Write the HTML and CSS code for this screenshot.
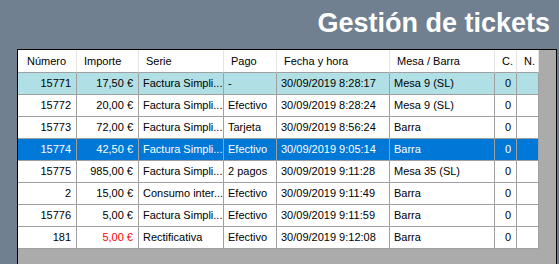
FILE: index.html
```html
<!DOCTYPE html>
<html lang="es">
<head>
    <meta charset="UTF-8">
    <meta name="viewport" content="width=device-width, initial-scale=1.0">
    <title>Gestión de tickets</title>
    <link rel="stylesheet" href="styles.css">
</head>
<body>
    <h1 class="title">Gestión de tickets</h1>

    <div class="grid">
        <div class="row header">
            <div class="cell">Número</div>
            <div class="cell">Importe</div>
            <div class="cell">Serie</div>
            <div class="cell">Pago</div>
            <div class="cell">Fecha y hora</div>
            <div class="cell">Mesa / Barra</div>
            <div class="cell">C.</div>
            <div class="cell">N.</div>
        </div>

        <div class="row current">
            <div class="cell num">15771</div>
            <div class="cell num">17,50 €</div>
            <div class="cell">Factura Simpli...</div>
            <div class="cell">-</div>
            <div class="cell">30/09/2019 8:28:17</div>
            <div class="cell">Mesa 9 (SL)</div>
            <div class="cell num">0</div>
            <div class="cell"></div>
        </div>
        <div class="row">
            <div class="cell num">15772</div>
            <div class="cell num">20,00 €</div>
            <div class="cell">Factura Simpli...</div>
            <div class="cell">Efectivo</div>
            <div class="cell">30/09/2019 8:28:24</div>
            <div class="cell">Mesa 9 (SL)</div>
            <div class="cell num">0</div>
            <div class="cell"></div>
        </div>
        <div class="row">
            <div class="cell num">15773</div>
            <div class="cell num">72,00 €</div>
            <div class="cell">Factura Simpli...</div>
            <div class="cell">Tarjeta</div>
            <div class="cell">30/09/2019 8:56:24</div>
            <div class="cell">Barra</div>
            <div class="cell num">0</div>
            <div class="cell"></div>
        </div>
        <div class="row selected">
            <div class="cell num">15774</div>
            <div class="cell num">42,50 €</div>
            <div class="cell">Factura Simpli...</div>
            <div class="cell">Efectivo</div>
            <div class="cell">30/09/2019 9:05:14</div>
            <div class="cell">Barra</div>
            <div class="cell num">0</div>
            <div class="cell"></div>
        </div>
        <div class="row">
            <div class="cell num">15775</div>
            <div class="cell num">985,00 €</div>
            <div class="cell">Factura Simpli...</div>
            <div class="cell">2 pagos</div>
            <div class="cell">30/09/2019 9:11:28</div>
            <div class="cell">Mesa 35 (SL)</div>
            <div class="cell num">0</div>
            <div class="cell"></div>
        </div>
        <div class="row">
            <div class="cell num">2</div>
            <div class="cell num">15,00 €</div>
            <div class="cell">Consumo inter...</div>
            <div class="cell">Efectivo</div>
            <div class="cell">30/09/2019 9:11:49</div>
            <div class="cell">Barra</div>
            <div class="cell num">0</div>
            <div class="cell"></div>
        </div>
        <div class="row">
            <div class="cell num">15776</div>
            <div class="cell num">5,00 €</div>
            <div class="cell">Factura Simpli...</div>
            <div class="cell">Efectivo</div>
            <div class="cell">30/09/2019 9:11:59</div>
            <div class="cell">Barra</div>
            <div class="cell num">0</div>
            <div class="cell"></div>
        </div>
        <div class="row">
            <div class="cell num">181</div>
            <div class="cell num negative">5,00 €</div>
            <div class="cell">Rectificativa</div>
            <div class="cell">Efectivo</div>
            <div class="cell">30/09/2019 9:12:08</div>
            <div class="cell">Barra</div>
            <div class="cell num">0</div>
            <div class="cell"></div>
        </div>
    </div>
</body>
</html>
```

FILE: styles.css
```css
body {
    font-family: "Liberation Sans", Arial, sans-serif;
    background-color: #708090;
    margin: 0;
    padding: 0;
    overflow: hidden;
    height: 264px;
}
.title {
    margin: 8px 0 0 0;
    padding-right: 9px;
    text-align: right;
    color: #fff;
    font-size: 27px;
    line-height: 30px;
    font-weight: bold;
}
.grid {
    margin: 11px 0 0 17px;
    width: 538px;
    height: 214px;
    border: 1px solid #000;
    background-color: #ababab;
    font-size: 11px;
    color: #000;
}
.row {
    display: grid;
    grid-template-columns: 59px 62px 85px 53px 113px 105px 22px 22px;
    height: 22px;
    background-color: #fff;
    width: 521px;
}
.cell {
    box-sizing: border-box;
    border-right: 1px solid #a0a0a0;
    border-bottom: 1px solid #a0a0a0;
    padding: 0 3px 0 4px;
    line-height: 21px;
    white-space: nowrap;
    overflow: hidden;
}
.cell.num {
    text-align: right;
    padding: 0 5px 0 2px;
}
.header {
    height: 23px;
}
.header .cell {
    border-right-color: #e3e3e3;
    line-height: 22px;
    padding-left: 7px;
}
.header .cell:first-child {
    padding-left: 9px;
}
.current {
    background-color: #b0e0e6;
}
.selected {
    background-color: #0078d7;
    color: #fff;
}
.negative {
    color: #ff0000;
}
```
